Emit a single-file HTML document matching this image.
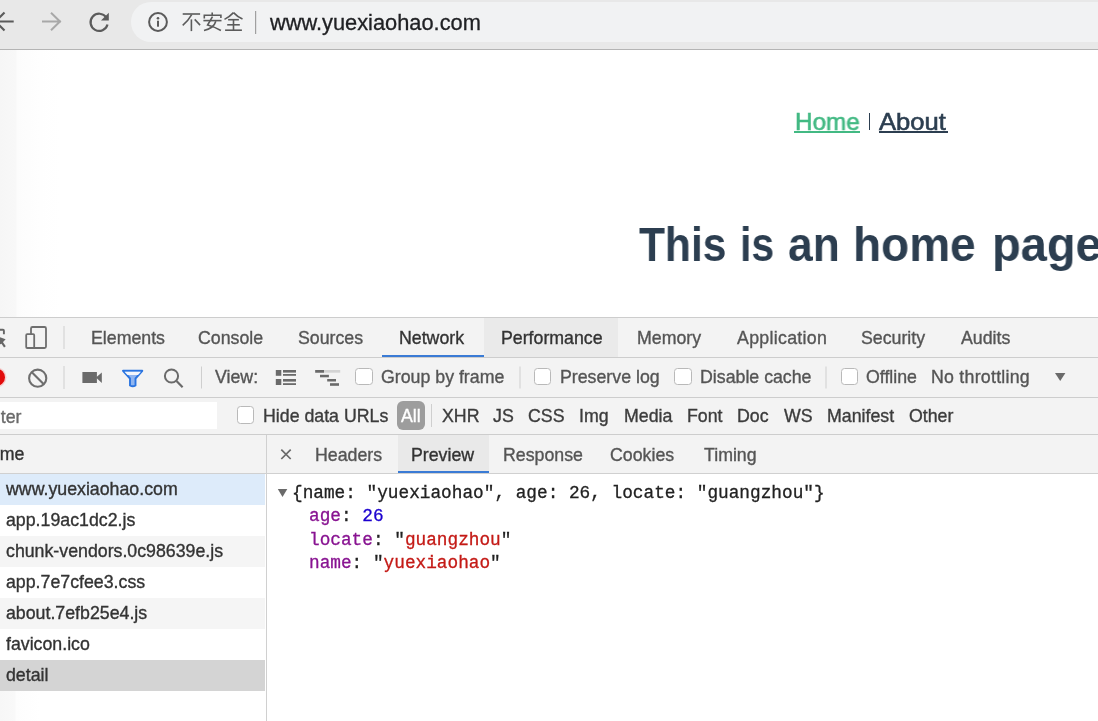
<!DOCTYPE html>
<html><head><meta charset="utf-8">
<style>
*{box-sizing:border-box;}
html,body{margin:0;padding:0;}
body{width:1098px;height:721px;overflow:hidden;position:relative;background:#fff;font-family:"Liberation Sans",sans-serif;}
.a{position:absolute;white-space:pre;line-height:1;will-change:transform;}
.t{font-size:17.75px;color:#555;-webkit-text-stroke-width:0.35px;}
.m{font-family:"Liberation Mono",monospace;font-size:17.75px;-webkit-text-stroke-width:0.3px;}
.ln{position:absolute;}
.hd{font-weight:bold;transform-origin:0 0;}
.nv{transform-origin:0 0;-webkit-text-stroke-width:0.6px;}
svg{position:absolute;overflow:visible;}
.cb{position:absolute;margin-top:-0.6px;width:17.5px;height:17.5px;background:#fff;border:1px solid #b9b9b9;border-radius:3.5px;}
</style></head><body>

<!-- browser top bar -->
<div class="ln" style="left:0;top:0;width:1098px;height:49px;background:#e8e8e8;"></div>
<div class="ln" style="left:131px;top:2px;width:1000px;height:39.5px;background:#f1f2f3;border-radius:20px;"></div>
<div class="ln" style="left:0;top:49px;width:1098px;height:1.2px;background:#b4b4b4;"></div>

<!-- back arrow -->
<svg style="left:0;top:0" width="120" height="48">
  <path d="M-5 21.5 H13.7 M4.5 12.5 L-4.5 21.5 L4.5 30.5" fill="none" stroke="#5b5b5b" stroke-width="2.2"/>
  <path d="M42 21.5 H61 M51 12.8 L60 21.5 L51 30.3" fill="none" stroke="#a8a8a8" stroke-width="2"/>
  <path d="M106.3 17.5 A8.6 8.6 0 1 0 107.5 24.5" fill="none" stroke="#5b5b5b" stroke-width="2.2"/>
  <path d="M108.8 12.8 L108.8 20.5 L101 20.5 Z" fill="#5b5b5b"/>
</svg>
<!-- info -->
<svg style="left:0;top:0" width="260" height="48">
  <circle cx="158" cy="22" r="8.9" fill="none" stroke="#5b5b5b" stroke-width="2"/>
  <circle cx="158" cy="18.3" r="1.3" fill="#5b5b5b"/>
  <rect x="157" y="20.7" width="2" height="6" fill="#5b5b5b"/>
  <rect x="255" y="11" width="1.2" height="23" fill="#a0a0a0"/>
</svg>
<svg style="left:0;top:0" width="260" height="48">
  <g fill="none" stroke="#5b5b5b" stroke-width="1.6" stroke-linecap="butt">
    <path d="M182.7 14 H200.1"/>
    <path d="M191.7 14.6 Q188 21 182.7 25.4"/>
    <path d="M191.4 19.4 V31.1"/>
    <path d="M194.7 19.4 L200.1 25.1"/>
    <path d="M212.2 12.4 V15"/>
    <path d="M204.3 18.5 V15.2 H220.9 V17.9"/>
    <path d="M203.4 20.6 H221.5"/>
    <path d="M212.5 16.7 L207.6 25 Q214 26.5 220.9 30.5"/>
    <path d="M215.8 21.2 Q214 28 204 30.5"/>
    <path d="M233.5 12.6 Q229.5 16.8 224.5 19.4"/>
    <path d="M233.5 12.6 Q237.5 16.8 242.5 19.1"/>
    <path d="M228.1 19.7 H238.9"/>
    <path d="M227.2 24.8 H239.8"/>
    <path d="M225.1 30.2 H241.9"/>
    <path d="M233.5 19.7 V30.2"/>
  </g>
</svg>
<div class="a" style="left:270.2px;top:11.8px;font-size:21.8px;color:#202124;-webkit-text-stroke-width:0.3px;">www.yuexiaohao.com</div>

<!-- page -->
<div class="ln" style="left:0;top:50px;width:60px;height:267px;background:linear-gradient(to right,#f6f6f6 0,#f8f8f8 16px,#fcfcfc 17px,#fefefe 40px,#fff 60px);"></div>
<div class="a nv" style="left:794.7px;top:110.2px;font-size:24.5px;color:#42b983;transform:scaleX(0.99);">Home</div>
<div class="ln" style="left:794.4px;top:131px;width:66px;height:1.8px;background:#42b983;"></div>
<div class="ln" style="left:868.8px;top:112.6px;width:1.6px;height:17.4px;background:#2c3e50;"></div>
<div class="a nv" style="left:879.2px;top:110.2px;font-size:24.5px;color:#2c3e50;transform:scaleX(1.045);">About</div>
<div class="ln" style="left:878.5px;top:131px;width:69.5px;height:1.8px;background:#2c3e50;"></div>
<div class="a hd" style="left:639.2px;top:221.4px;font-size:48px;color:#2c3e50;transform:scaleX(0.885);">This</div>
<div class="a hd" style="left:740.0px;top:221.4px;font-size:48px;color:#2c3e50;transform:scaleX(0.854);">is</div>
<div class="a hd" style="left:787.6px;top:221.4px;font-size:48px;color:#2c3e50;transform:scaleX(0.925);">an</div>
<div class="a hd" style="left:853.3px;top:221.4px;font-size:48px;color:#2c3e50;transform:scaleX(0.958);">home</div>
<div class="a hd" style="left:991.7px;top:221.4px;font-size:48px;color:#2c3e50;transform:scaleX(0.98);">page</div>

<!-- devtools -->
<div class="ln" style="left:0;top:317px;width:1098px;height:1px;background:#cdcdcd;"></div>
<div class="ln" style="left:0;top:318px;width:1098px;height:116px;background:#f3f3f3;"></div>
<div class="ln" style="left:0;top:357px;width:1098px;height:1px;background:#cdcdcd;"></div>
<div class="ln" style="left:0;top:397px;width:1098px;height:1px;background:#cdcdcd;"></div>
<div class="ln" style="left:0;top:434px;width:1098px;height:1px;background:#cdcdcd;"></div>

<!-- tab bar -->
<div class="ln" style="left:484px;top:318px;width:134px;height:39px;background:#eaeaea;"></div>
<div class="ln" style="left:382px;top:355px;width:102px;height:2px;background:#3a7bd5;"></div>
<svg style="left:0;top:0" width="70" height="400">
  <path d="M-1 329.8 H3 Q3.9 329.8 3.9 330.7 V334.3" fill="none" stroke="#666" stroke-width="1.9"/>
  <path d="M1 341 L4.9 346.9" fill="none" stroke="#666" stroke-width="2.1"/>
  <path d="M-4 335.8 L5.6 339.2 L0.8 344.6 Z" fill="#666"/>
  <rect x="31" y="327" width="15" height="21" rx="1.5" fill="none" stroke="#6e6e6e" stroke-width="1.8"/>
  <rect x="26.2" y="334.2" width="8" height="13.8" rx="1" fill="#f3f3f3" stroke="#6e6e6e" stroke-width="1.8"/>
  <rect x="63.5" y="326" width="1" height="23" fill="#cfcfcf"/>
  <circle cx="-3.5" cy="377.3" r="10" fill="#f5b5b5" opacity="0.6"/>
  <circle cx="-3.5" cy="377.3" r="8.5" fill="#e20b0b"/>
  <circle cx="37.7" cy="378.2" r="8.6" fill="none" stroke="#6e6e6e" stroke-width="2.1"/>
  <path d="M31.6 372.1 L43.8 384.3" stroke="#6e6e6e" stroke-width="2.1"/>
  <rect x="63.5" y="366" width="1" height="23" fill="#cfcfcf"/>
</svg>
<div class="a t" style="left:91.0px;top:329.7px;">Elements</div>
<div class="a t" style="left:198.1px;top:329.7px;">Console</div>
<div class="a t" style="left:298.3px;top:329.7px;">Sources</div>
<div class="a t" style="left:399.0px;top:329.7px;color:#333">Network</div>
<div class="a t" style="left:500.5px;top:329.7px;color:#333">Performance</div>
<div class="a t" style="left:636.9px;top:329.7px;">Memory</div>
<div class="a t" style="left:737.3px;top:329.7px;letter-spacing:0.3px;">Application</div>
<div class="a t" style="left:861.1px;top:329.7px;">Security</div>
<div class="a t" style="left:960.8px;top:329.7px;">Audits</div>

<!-- toolbar -->
<svg style="left:0;top:0" width="1098" height="400">
  <rect x="82.4" y="372" width="14.5" height="11" fill="#6a6a6a"/>
  <path d="M96 377.5 L101.8 372.5 V383 Z" fill="#6a6a6a"/>
  <path d="M123 370.8 H142.3 L135.5 378.5 V385.5 Q132.8 387 130 385.5 V378.5 Z" fill="#8fb5f0" stroke="#2a74e0" stroke-width="1.9" stroke-linejoin="round"/>
  <path d="M124.5 371.8 H141 L138 375 H127.5 Z" fill="#f3f6fb"/>
  <circle cx="171.5" cy="376" r="6.6" fill="none" stroke="#6a6a6a" stroke-width="2"/>
  <path d="M176.5 381 L182.6 387.2" stroke="#6a6a6a" stroke-width="2.2"/>
  <rect x="201" y="366.5" width="1" height="22" fill="#cfcfcf"/>
  <rect x="275.8" y="370" width="5.5" height="5.8" fill="#6a6a6a"/>
  <rect x="275.8" y="379" width="5.5" height="6" fill="#6a6a6a"/>
  <rect x="283" y="370" width="13" height="2.6" fill="#6a6a6a"/>
  <rect x="283" y="374" width="13" height="1.8" fill="#6a6a6a"/>
  <rect x="283" y="379" width="13" height="2.6" fill="#6a6a6a"/>
  <rect x="283" y="383.2" width="13" height="1.8" fill="#6a6a6a"/>
  <rect x="315.2" y="370" width="25" height="2.7" fill="#d3d3d3"/>
  <rect x="315.2" y="370" width="8.8" height="2.7" fill="#6a6a6a"/>
  <rect x="320" y="374.8" width="8.9" height="2.5" fill="#6a6a6a"/>
  <rect x="327.2" y="379" width="8.8" height="2.5" fill="#6a6a6a"/>
  <rect x="330" y="383.2" width="9" height="2.6" fill="#6a6a6a"/>
  <rect x="519.5" y="366.5" width="1" height="22" fill="#cfcfcf"/>
  <rect x="825.5" y="366.5" width="1" height="22" fill="#cfcfcf"/>
  <path d="M1055 373 H1065.4 L1060.2 381 Z" fill="#6a6a6a"/>
</svg>
<div class="cb" style="left:355px;top:368.5px;"></div>
<div class="cb" style="left:533.5px;top:368.5px;"></div>
<div class="cb" style="left:674px;top:368.5px;"></div>
<div class="cb" style="left:840.5px;top:368.5px;"></div>
<div class="a t" style="left:215.2px;top:369.4px;">View:</div>
<div class="a t" style="left:381.2px;top:369.4px;">Group by frame</div>
<div class="a t" style="left:559.7px;top:369.4px;">Preserve log</div>
<div class="a t" style="left:699.7px;top:369.4px;">Disable cache</div>
<div class="a t" style="left:865.7px;top:369.4px;">Offline</div>
<div class="a t" style="left:931.2px;top:369.4px;letter-spacing:0.25px;">No throttling</div>

<!-- filter row -->
<div class="ln" style="left:0;top:402px;width:217px;height:27px;background:#fff;"></div>
<div class="a t" style="left:-17.6px;top:409.3px;color:#6a6a6a;">Filter</div>
<div class="cb" style="left:236.5px;top:407px;"></div>
<div class="a t" style="left:262.9px;top:408px;color:#3c3c3c;">Hide data URLs</div>
<div class="ln" style="left:397px;top:401px;width:27.5px;height:28.5px;background:#9d9d9d;border-radius:6px;"></div>
<div class="a t" style="left:400.6px;top:408px;color:#fff;">All</div>
<div class="ln" style="left:430.5px;top:404px;width:1px;height:23px;background:#cfcfcf;"></div>
<div class="a t" style="left:442.4px;top:408px;color:#3c3c3c;">XHR</div>
<div class="a t" style="left:492.9px;top:408px;color:#3c3c3c;">JS</div>
<div class="a t" style="left:528.4px;top:408px;color:#3c3c3c;">CSS</div>
<div class="a t" style="left:579.4px;top:408px;color:#3c3c3c;">Img</div>
<div class="a t" style="left:623.9px;top:408px;color:#3c3c3c;">Media</div>
<div class="a t" style="left:686.9px;top:408px;color:#3c3c3c;">Font</div>
<div class="a t" style="left:737.4px;top:408px;color:#3c3c3c;">Doc</div>
<div class="a t" style="left:784.4px;top:408px;color:#3c3c3c;">WS</div>
<div class="a t" style="left:826.9px;top:408px;color:#3c3c3c;">Manifest</div>
<div class="a t" style="left:909.4px;top:408px;color:#3c3c3c;">Other</div>

<!-- left list -->
<div class="ln" style="left:0;top:435px;width:266px;height:38px;background:#f3f3f3;"></div>
<div class="ln" style="left:0;top:473px;width:266px;height:1px;background:#d0d0d0;"></div>
<div class="a t" style="left:-22.8px;top:445.8px;color:#333;">Name</div>
<div class="ln" style="left:0;top:474px;width:265px;height:31px;background:#ddebfa;"></div>
<div class="ln" style="left:0;top:536px;width:265px;height:31px;background:#f5f5f5;"></div>
<div class="ln" style="left:0;top:598px;width:265px;height:31px;background:#f5f5f5;"></div>
<div class="ln" style="left:0;top:660px;width:265px;height:31px;background:#d4d4d4;"></div>
<div class="a t" style="left:6px;top:481.2px;color:#333;">www.yuexiaohao.com</div>
<div class="a t" style="left:6px;top:512.2px;color:#333;">app.19ac1dc2.js</div>
<div class="a t" style="left:6px;top:543.2px;color:#333;">chunk-vendors.0c98639e.js</div>
<div class="a t" style="left:6px;top:574.2px;color:#333;">app.7e7cfee3.css</div>
<div class="a t" style="left:6px;top:605.2px;color:#333;">about.7efb25e4.js</div>
<div class="a t" style="left:6px;top:636.2px;color:#333;">favicon.ico</div>
<div class="a t" style="left:6px;top:667.2px;color:#333;">detail</div>
<div class="ln" style="left:0;top:691px;width:40px;height:30px;background:linear-gradient(to right,#f7f7f7 0,#f9f9f9 15px,#fdfdfd 16px,#fff 40px);"></div>
<div class="ln" style="left:265.5px;top:435px;width:1px;height:286px;background:#d0d0d0;"></div>

<!-- right panel -->
<div class="ln" style="left:266.5px;top:435px;width:832px;height:38px;background:#f3f3f3;"></div>
<div class="ln" style="left:398px;top:435px;width:91px;height:38px;background:#e9e9e9;"></div>
<div class="ln" style="left:266.5px;top:473px;width:832px;height:1px;background:#d0d0d0;"></div>
<div class="ln" style="left:398px;top:471px;width:91px;height:2px;background:#3a7bd5;"></div>
<svg style="left:0;top:0" width="1098" height="721">
  <path d="M281.3 449.6 L290.7 459 M290.7 449.6 L281.3 459" stroke="#6a6a6a" stroke-width="1.7"/>
  <path d="M277.8 489 H287.3 L282.5 497 Z" fill="#6a6a6a"/>
</svg>
<div class="a t" style="left:315.3px;top:446.5px;">Headers</div>
<div class="a t" style="left:411.4px;top:446.5px;color:#333;">Preview</div>
<div class="a t" style="left:502.8px;top:446.5px;">Response</div>
<div class="a t" style="left:610.4px;top:446.5px;">Cookies</div>
<div class="a t" style="left:703.6px;top:446.5px;">Timing</div>

<div class="a m" style="left:291.6px;top:485px;color:#222;">{name: "yuexiaohao", age: 26, locate: "guangzhou"}</div>
<div class="a m" style="left:309.0px;top:508.4px;"><span style="color:#881391">age</span><span style="color:#222">: </span><span style="color:#1c00cf">26</span></div>
<div class="a m" style="left:309.0px;top:531.8px;"><span style="color:#881391">locate</span><span style="color:#222">: "</span><span style="color:#c41a16">guangzhou</span><span style="color:#222">"</span></div>
<div class="a m" style="left:309.0px;top:555.0px;"><span style="color:#881391">name</span><span style="color:#222">: "</span><span style="color:#c41a16">yuexiaohao</span><span style="color:#222">"</span></div>

</body></html>
